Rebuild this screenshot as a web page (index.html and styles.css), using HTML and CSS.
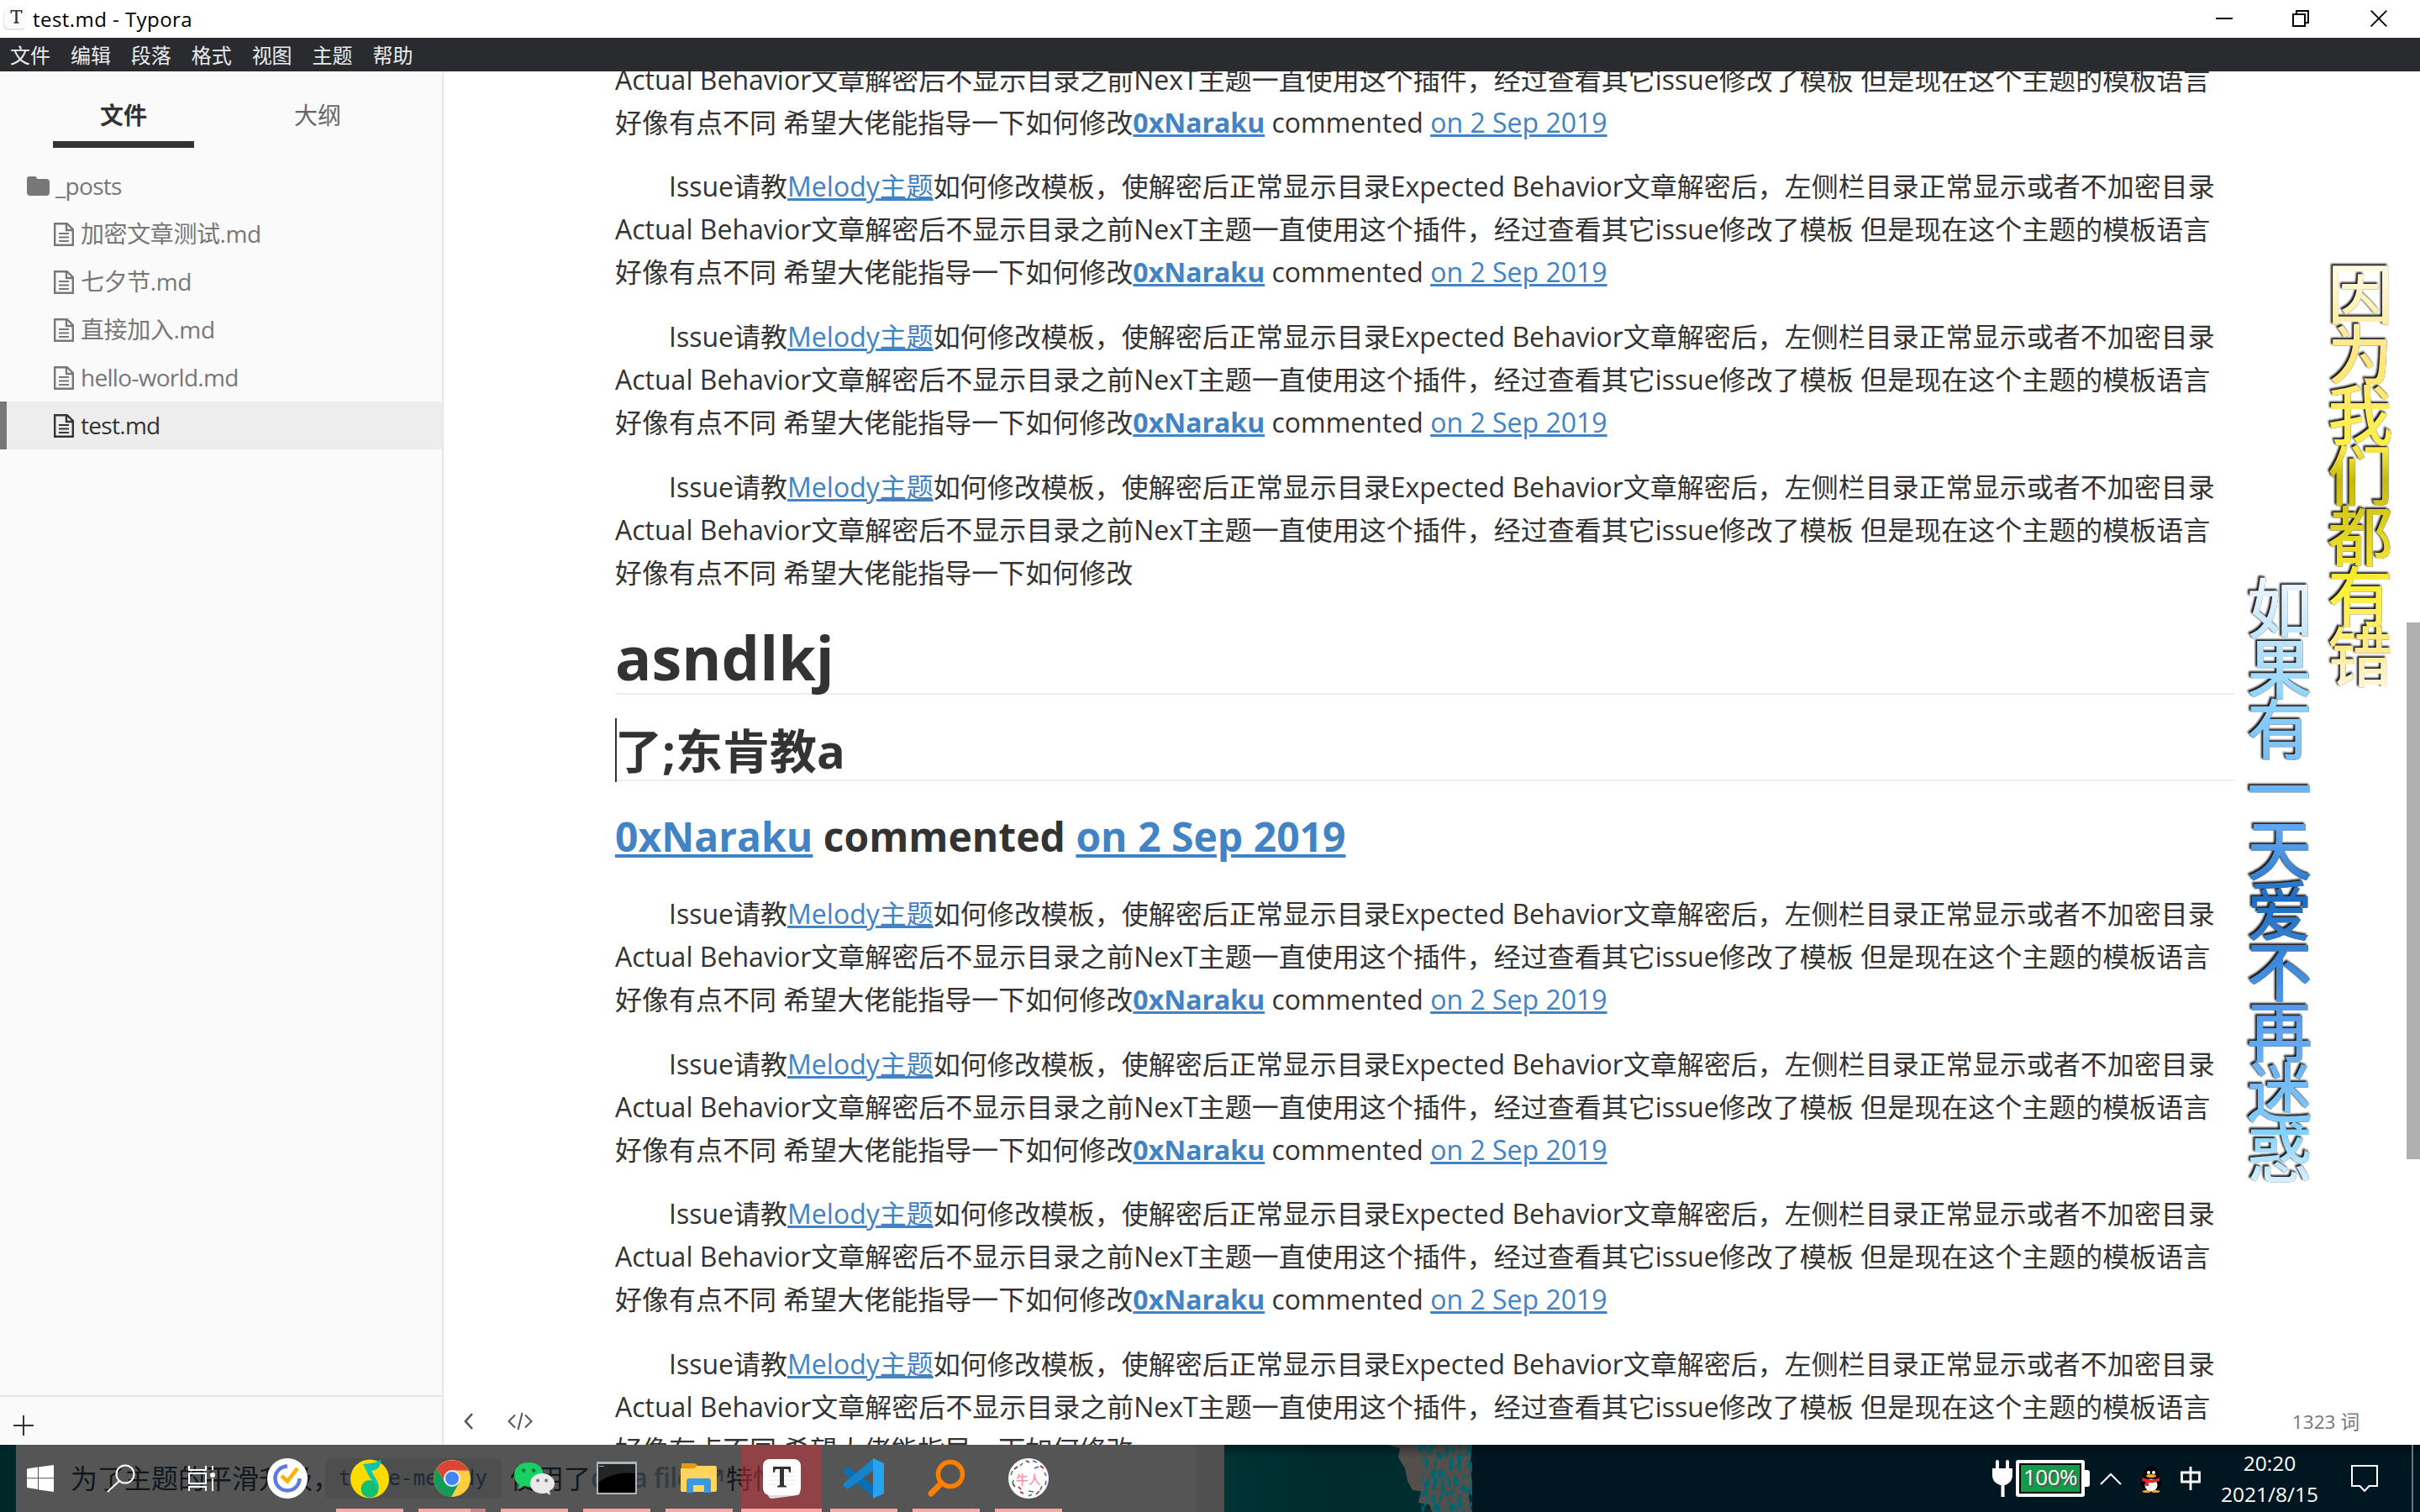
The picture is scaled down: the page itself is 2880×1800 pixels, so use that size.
FILE: index.html
```html
<!DOCTYPE html>
<html lang="zh-CN">
<head>
<meta charset="utf-8">
<title>test.md - Typora</title>
<link rel="stylesheet" href="styles.css">
</head>
<body>
<div class="screen">
  <header class="titlebar">
    <svg class="app-icon" width="30" height="30" viewBox="0 0 30 30"><rect x="1" y="3" width="27" height="26" rx="6" fill="#e4e4e4"/><rect x="2" y="0" width="27" height="27" rx="6" fill="#fafafa"/><path d="M9.500 5h14v4h-1l-.8-2.500h-4v12.500l2 .8v.9h-6.400v-.9l2-.8V6.500h-4L10.500 9h-1z" fill="#333"/></svg>
    <span class="title">test.md - Typora</span>
    <div class="caption">
      <svg width="20" height="20" viewBox="0 0 20 20"><path d="M0 10h20" stroke="#000" stroke-width="2"/></svg>
      <svg width="20" height="20" viewBox="0 0 20 20" fill="none" stroke="#000" stroke-width="2"><path d="M1 5h14v14H1zM5 5V1h14v14h-4"/></svg>
      <svg width="20" height="20" viewBox="0 0 20 20"><path d="M.7.700l18.600 18.600M19.300.700L.7 19.300" stroke="#000" stroke-width="1.800"/></svg>
    </div>
  </header>
  <nav class="menubar"><span>文件</span><span>编辑</span><span>段落</span><span>格式</span><span>视图</span><span>主题</span><span>帮助</span></nav>
  <svg width="0" height="0" class="defs">
    <symbol id="file" viewBox="0 0 24 28"><path d="M1.200 1.200h14.600L22.800 8v18.800H1.200zM15 1.200V9h7.800" fill="none" stroke="currentColor" stroke-width="2.400"/><path d="M6 13h12M6 17.500h12M6 22h12" stroke="currentColor" stroke-width="2"/></symbol>
  </svg>
  <div class="workspace">
    <aside class="sidebar">
      <div class="tabs"><div class="tab active">文件</div><div class="tab">大纲</div></div>
      <ul class="tree">
        <li class="folder latin"><svg width="28" height="24" viewBox="0 0 28 24"><path d="M0 3a3 3 0 0 1 3-3h6a3 3 0 0 1 3 3h11a4 4 0 0 1 4 4v12a4 4 0 0 1-4 4H4a4 4 0 0 1-4-4z" fill="#777"/></svg>_posts</li>
        <li><svg width="24" height="28"><use href="#file"/></svg>加密文章测试.md</li>
        <li><svg width="24" height="28"><use href="#file"/></svg>七夕节.md</li>
        <li><svg width="24" height="28"><use href="#file"/></svg>直接加入.md</li>
        <li class="latin"><svg width="24" height="28"><use href="#file"/></svg>hello-world.md</li>
        <li class="current latin"><svg width="24" height="28"><use href="#file"/></svg>test.md</li>
      </ul>
      <div class="sidebar-footer"><svg width="24" height="24" viewBox="0 0 24 24"><path d="M12 0v24M0 12h24" stroke="#333" stroke-width="2"/></svg></div>
    </aside>
    <main class="editor">
      <article class="doc">
        <p>Issue请教<a>Melody主题</a>如何修改模板，使解密后正常显示目录Expected Behavior文章解密后，左侧栏目录正常显示或者不加密目录<br>Actual Behavior文章解密后不显示目录之前NexT主题一直使用这个插件，经过查看其它issue修改了模板 但是现在这个主题的模板语言<br>好像有点不同 希望大佬能指导一下如何修改<a><b>0xNaraku</b></a> commented <a>on 2 Sep 2019</a></p>
        <p>Issue请教<a>Melody主题</a>如何修改模板，使解密后正常显示目录Expected Behavior文章解密后，左侧栏目录正常显示或者不加密目录<br>Actual Behavior文章解密后不显示目录之前NexT主题一直使用这个插件，经过查看其它issue修改了模板 但是现在这个主题的模板语言<br>好像有点不同 希望大佬能指导一下如何修改<a><b>0xNaraku</b></a> commented <a>on 2 Sep 2019</a></p>
        <p>Issue请教<a>Melody主题</a>如何修改模板，使解密后正常显示目录Expected Behavior文章解密后，左侧栏目录正常显示或者不加密目录<br>Actual Behavior文章解密后不显示目录之前NexT主题一直使用这个插件，经过查看其它issue修改了模板 但是现在这个主题的模板语言<br>好像有点不同 希望大佬能指导一下如何修改<a><b>0xNaraku</b></a> commented <a>on 2 Sep 2019</a></p>
        <p>Issue请教<a>Melody主题</a>如何修改模板，使解密后正常显示目录Expected Behavior文章解密后，左侧栏目录正常显示或者不加密目录<br>Actual Behavior文章解密后不显示目录之前NexT主题一直使用这个插件，经过查看其它issue修改了模板 但是现在这个主题的模板语言<br>好像有点不同 希望大佬能指导一下如何修改</p>
        <h1>asndlkj</h1>
        <h2><i class="caret"></i>了;东肯教a</h2>
        <h3><a>0xNaraku</a> commented <a>on 2 Sep 2019</a></h3>
        <p>Issue请教<a>Melody主题</a>如何修改模板，使解密后正常显示目录Expected Behavior文章解密后，左侧栏目录正常显示或者不加密目录<br>Actual Behavior文章解密后不显示目录之前NexT主题一直使用这个插件，经过查看其它issue修改了模板 但是现在这个主题的模板语言<br>好像有点不同 希望大佬能指导一下如何修改<a><b>0xNaraku</b></a> commented <a>on 2 Sep 2019</a></p>
        <p>Issue请教<a>Melody主题</a>如何修改模板，使解密后正常显示目录Expected Behavior文章解密后，左侧栏目录正常显示或者不加密目录<br>Actual Behavior文章解密后不显示目录之前NexT主题一直使用这个插件，经过查看其它issue修改了模板 但是现在这个主题的模板语言<br>好像有点不同 希望大佬能指导一下如何修改<a><b>0xNaraku</b></a> commented <a>on 2 Sep 2019</a></p>
        <p>Issue请教<a>Melody主题</a>如何修改模板，使解密后正常显示目录Expected Behavior文章解密后，左侧栏目录正常显示或者不加密目录<br>Actual Behavior文章解密后不显示目录之前NexT主题一直使用这个插件，经过查看其它issue修改了模板 但是现在这个主题的模板语言<br>好像有点不同 希望大佬能指导一下如何修改<a><b>0xNaraku</b></a> commented <a>on 2 Sep 2019</a></p>
        <p>Issue请教<a>Melody主题</a>如何修改模板，使解密后正常显示目录Expected Behavior文章解密后，左侧栏目录正常显示或者不加密目录<br>Actual Behavior文章解密后不显示目录之前NexT主题一直使用这个插件，经过查看其它issue修改了模板 但是现在这个主题的模板语言<br>好像有点不同 希望大佬能指导一下如何修改</p>
      </article>
      <div class="editor-footer">
        <svg width="11" height="20" viewBox="0 0 11 20"><path d="M10 1L2 10l8 9" fill="none" stroke="#555" stroke-width="2.600"/></svg>
        <svg width="30" height="22" viewBox="0 0 30 22"><path d="M9 3.500L1.500 11 9 18.500M21 3.500L28.500 11 21 18.500M17.500 1l-5 20" fill="none" stroke="#555" stroke-width="2"/></svg>
        <span class="words">1323 词</span>
      </div>
      <div class="scroll-thumb"></div>
    </main>
  </div>
  <div class="lyric yellow">因为我们都有错</div>
  <div class="lyric blue">如果有一天爱不再迷惑</div>

  <footer class="taskbar">
    <svg class="wallpaper" width="2880" height="80" viewBox="0 0 2880 80">
      <defs>
        <linearGradient id="sea" x1="0" x2="1"><stop offset="0" stop-color="#003434"/><stop offset=".45" stop-color="#002a2c"/><stop offset="1" stop-color="#002f31"/></linearGradient>
        <filter id="grain" x="0" y="0" width="1" height="1"><feTurbulence type="fractalNoise" baseFrequency=".2 .1" numOctaves="3" seed="8"/><feColorMatrix values="0 0 0 0 0  0 0 0 0 .13  0 0 0 0 .16  9 0 0 0 -4.400"/><feComposite in2="SourceGraphic" operator="in"/></filter>
        <linearGradient id="shade" x2="0" y2="1"><stop offset="0" stop-opacity=".35"/><stop offset="1" stop-opacity="0"/></linearGradient>
      </defs>
      <rect width="2880" height="80" fill="#001722"/>
      <rect width="19" height="80" fill="#002829"/>
      <rect x="19" width="1438" height="80" fill="#555"/>
      <rect x="1423" width="34" height="80" fill="#505050"/>
      <path d="M1457 0H1752V80H1457z" fill="url(#sea)"/>
      <path d="M1651 0h97l3 10-2 14 3 22-4 15 3 19h-47l-3-9-13-2 3-14-10-1-6-11-3-15-8-13 2-11z" fill="#554f4b"/>
      <path d="M1680 0h72v80h-60l-2-26 4-28z" fill="#554f4b" filter="url(#grain)"/>
      <rect x="1457" width="1423" height="16" fill="url(#shade)"/>
    </svg>
    <div class="behind"><span>为了主题的平滑升级<span class="half">，</span></span><code>theme-melody</code><span>使用了</span><b>data files</b><svg class="ext" width="16" height="24" viewBox="0 0 16 24"><path d="M2 5h12v13M14 5L2 19" fill="none" stroke="#2f363e" stroke-width="2.500"/></svg><span class="tail">特性</span></div>
    <div class="apps">
      <div class="sys"><svg width="32" height="32" viewBox="0 0 32 32" fill="#fff"><path d="M0 4.500l13-1.900v12.700H0zM14 2.400L32 0v15.300H14zM0 16.300h13V29L0 27zM14 16.300h18V32l-18-2.500z"/></svg></div>
      <div class="sys"><svg width="34" height="34" viewBox="0 0 34 34" fill="none" stroke="#fff" stroke-width="2"><circle cx="22" cy="12" r="10.500"/><path d="M15 20L1 33"/></svg></div>
      <div class="sys"><svg width="34" height="32" viewBox="0 0 34 32" fill="none" stroke="#fff" stroke-width="2"><path d="M2 1v5h20V1M2 31v-5h20v5M2 10h20v12H2zM30 1v5M30 16v15"/><circle cx="30" cy="12" r="3" fill="#fff" stroke="none"/></svg></div>
      <div class="app first"><svg width="48" height="48" viewBox="0 0 48 48"><circle cx="24" cy="24" r="24" fill="#fff"/><path d="M24 9.500A14.500 14.500 0 1 0 38.500 24" fill="none" stroke="#5b7be0" stroke-width="4.500"/><path d="M17 21l7 6.500L36 12" fill="none" stroke="#ffb000" stroke-width="4.500"/></svg></div>
      <div class="app run"><svg width="48" height="48" viewBox="0 0 48 48"><circle cx="24" cy="24.500" r="23" fill="#ffdc00"/><circle cx="24" cy="36.500" r="10.500" fill="#12bf70"/><path d="M37 1c-4 5-12 5-21 6l8 16c4 4 7 9 9 15l2-2c0-9-6-14-9-21 8-1 12-6 11-14z" fill="#13c4ad"/></svg></div>
      <div class="app run stacked"><svg width="46" height="46" viewBox="0 0 46 46"><circle cx="23" cy="23" r="22" fill="#ffcd40"/><path d="M4.500 11.500A22 22 0 0 1 42.500 13.500H23l-9 12z" fill="#db4437"/><path d="M4.500 11.500A22 22 0 0 0 22 45l9.500-17L14 26z" fill="#149a58"/><circle cx="23" cy="23" r="10" fill="#f1f1f1"/><circle cx="23" cy="23" r="8" fill="#4285f4"/></svg></div>
      <div class="app run"><svg width="48" height="42" viewBox="0 0 48 42"><path d="M17 2C7 2 0 8 0 17c0 5 2 9 6 11l-1 6 6-4c15 3 24-4 24-13S27 2 17 2z" fill="#18d063"/><circle cx="11" cy="11.500" r="2.300" fill="#0b7438"/><circle cx="23" cy="11.500" r="2.300" fill="#0b7438"/><path d="M33 15c-8 0-14 5-14 12s6 12 14 12c2 0 4 0 5-1l5 3-1-5c4-2 6-5 6-9 0-7-7-12-15-12z" fill="#e9e9e9"/><circle cx="28" cy="23.500" r="2" fill="#777"/><circle cx="38" cy="23.500" r="2" fill="#777"/></svg></div>
      <div class="app run"><svg width="48" height="40" viewBox="0 0 48 40"><path d="M0 0h48v39H0z" fill="#aeb4bb"/><path d="M2 3h44v34H2z" fill="#000"/><path d="M2 3h44v11C27 12 12 17 2 25z" fill="#252525"/><path d="M3 5.500h6" stroke="#aaa"/></svg></div>
      <div class="app run"><svg width="44" height="36" viewBox="0 0 44 36"><path d="M1 0h16l4 3v6H1z" fill="#e29c00"/><path d="M0 6h16l4-3h22l1 2v28l-2 1H1l-1-2z" fill="#ffd55f"/><path d="M7 35V21q0-3 3-3h23q3 0 3 3v14h-8v-9H15v9z" fill="#3b97e0"/></svg></div>
      <div class="app run focused"><svg width="48" height="48" viewBox="0 0 48 48"><path d="M2 36l44 3a4 4 0 0 1-3 5l-29 4a5 5 0 0 1-6-4z" fill="#ddd"/><rect x="2" y="1" width="45" height="43" rx="8" fill="#fff"/><path d="M9 16h31M9 21h31M9 26h31M9 31h31" stroke="#e8e8e8"/><path d="M14 10h21v7h-1.500l-1.500-4h-5v19l3 1v1.500H19V33l3-1V13h-5l-1.500 4H14z" fill="#333"/></svg></div>
      <div class="app run"><svg width="50" height="48" viewBox="0 0 50 48"><path d="M1 14l5-4 31 23v14L1 17z" fill="#0a6fb5"/><path d="M1 33l5 4L37 14V0L1 30z" fill="#1484cb"/><path d="M36 0l13 6v36l-13 6z" fill="#26a3f1"/></svg></div>
      <div class="app run"><svg width="46" height="46" viewBox="0 0 46 46" fill="none"><circle cx="28" cy="18" r="14.500" stroke="#ff8000" stroke-width="5.500"/><path d="M17 29L5 41" stroke="#ff8000" stroke-width="7" stroke-linecap="round"/></svg></div>
      <div class="app run"><svg width="48" height="48" viewBox="0 0 48 48"><circle cx="24" cy="24" r="24" fill="#fff"/><g fill="none" stroke-width="1.600"><path d="M7 13l4-3M21 3l4 2M38 9l4 3M5 30l3 4M14 40l4 2M33 43l4-4M12 34l3 3" stroke="#8e2a35"/><path d="M3 20l2-5M17 6l-3 3M40 33l-2 5M6 26l-1 4M24 45l4-2" stroke="#3d8a48"/><path d="M43 17l2 4M45 27l-1 5M29 3l5 2M24 39l6 1M31 12l5-2" stroke="#4b67b5"/></g><text x="24" y="31" text-anchor="middle" class="badge-text">牛人</text></svg></div>
    </div>
    <div class="tray">
      <svg width="24" height="44" viewBox="0 0 24 44" fill="#fff"><path d="M4 2a2 2 0 0 1 4 0v8h8V2a2 2 0 0 1 4 0v8h4v8c0 6-4 11-9.500 12v12a2 2 0 0 1-4 2V30C4 29 0 24 0 18v-8h4z"/></svg>
      <div class="battery">100%</div>
      <svg class="chev" width="26" height="15" viewBox="0 0 26 15"><path d="M1 14L13 2l12 12" fill="none" stroke="#fff" stroke-width="2"/></svg>
      <svg class="qq" width="26" height="31" viewBox="0 0 26 31"><ellipse cx="13" cy="12" rx="10" ry="12" fill="#000"/><ellipse cx="13" cy="20" rx="12.500" ry="8" fill="#000"/><ellipse cx="13" cy="22" rx="7.500" ry="7.500" fill="#fff"/><circle cx="10" cy="7" r="2" fill="#fff"/><circle cx="16" cy="7" r="2" fill="#fff"/><ellipse cx="13" cy="11" rx="6" ry="2" fill="#f7a81b"/><path d="M3 13q10 5 20 0v4q-7 3-13 2v4H6v-5l-4-1z" fill="#e8232a"/><ellipse cx="7.500" cy="29.500" rx="5" ry="1.600" fill="#f7a81b"/><ellipse cx="18.500" cy="29.500" rx="5" ry="1.600" fill="#f7a81b"/></svg>
      <svg class="ime" width="24" height="28" viewBox="0 0 24 28"><path d="M1.500 7h21v11h-21zM12 0v28" fill="none" stroke="#fff" stroke-width="2.800"/></svg>
      <div class="clock"><span>20:20</span><span>2021/8/15</span></div>
      <svg class="notice" width="32" height="32" viewBox="0 0 32 32"><path d="M1 1h30v24H21.500L16 31l-5.500-6H1z" fill="none" stroke="#fff" stroke-width="2"/></svg>
      <i class="peek"></i>
    </div>
  </footer>
</div>
</body>
</html>
```
FILE: styles.css
```css
* { box-sizing: border-box; }
body {
  margin: 0;
  font-family: "Open Sans", "Noto Sans CJK SC", sans-serif;
  color: #333;
  background: #fff;
}
svg { display: block; flex: none; }
.defs { position: absolute; }
.screen {
  position: relative;
  width: 2880px;
  height: 1800px;
  display: flex;
  flex-direction: column;
  overflow: hidden;
}

.titlebar { height: 45px; flex: none; display: flex; align-items: center; padding: 0 39px 2px 3px; }
.title { margin: 2px 0 0 6px; font-size: 24px; letter-spacing: .45px; color: #000; }
.caption { margin-left: auto; display: flex; gap: 72px; }
.caption svg:first-child { margin-right: -1px; }
.caption svg:nth-child(2) { margin-right: 1px; }

.menubar {
  height: 40px; flex: none;
  display: flex; align-items: center; gap: 24px;
  padding-left: 12px;
  background: #2a2b2f; color: #e9ecef;
  font-size: 24px; line-height: 40px;
}
.menubar span { padding-top: 2px; margin-right: -.1px; }

.workspace { height: 1635px; flex: none; display: flex; }
.sidebar {
  width: 528px; flex: none;
  display: flex; flex-direction: column;
  background: #fafafa;
  border-right: 2px solid #e7e7e7;
}
.tabs { display: flex; gap: 63px; padding-left: 63px; height: 91px; }
.tab {
  width: 168px; height: 91px;
  text-align: center;
  font-size: 28px; line-height: 104px;
  color: #666;
}
.tab.active { color: #333; font-weight: 700; border-bottom: 8px solid #333; }
.tree { list-style: none; margin: 17px 0 0; padding: 0; color: #777; font-size: 28px; letter-spacing: -.4px; }
.tree li { height: 57px; display: flex; align-items: center; gap: 8px; padding-left: 64px; line-height: 57px; white-space: nowrap; }
.tree .latin { letter-spacing: -.7px; }
.tree .folder { padding-left: 32px; gap: 6px; }
.tree .current { background: #ededed; color: #333; border-left: 8px solid #777; padding-left: 56px; }
.sidebar-footer { margin-top: auto; height: 59px; border-top: 2px solid #e7e7e7; padding: 22px 0 0 16px; }

.editor { position: relative; flex: 1; overflow: hidden; }
.doc { width: 1928px; margin: -67.200px 0 0 204px; font-size: 32px; line-height: 51px; white-space: nowrap; }
.doc p { margin: 0 0 25.600px; text-indent: 64px; }
.doc a { color: #4183c4; text-decoration: underline; }
.doc h1, .doc h2, .doc h3 { margin: 32px 0; font-weight: 700; }
.doc h1 { font-size: 72px; line-height: 86.400px; border-bottom: 2px solid #eee; }
.doc h2 { position: relative; font-size: 56px; line-height: 68.600px; border-bottom: 2px solid #eee; }
.doc h3 { font-size: 48px; line-height: 68.600px; }
.caret { position: absolute; left: 0; top: -4px; width: 2px; height: 76px; background: #333; }
.editor-footer {
  position: absolute; left: 24px; right: 72px; bottom: 16px; height: 24px;
  display: flex; align-items: center; gap: 41px;
}
.words { margin: -2px 0 0 auto; color: #777; font-size: 22.600px; }
.scroll-thumb { position: absolute; right: 0; top: 656px; width: 16px; height: 639px; background: #b0b0b0; }

.lyric {
  position: absolute;
  writing-mode: vertical-rl;
  font-family: "Noto Sans CJK SC", sans-serif;
  font-size: 78px; line-height: 84px; letter-spacing: -6px;
  font-weight: 500;
  color: transparent;
  -webkit-background-clip: text;
  background-clip: text;
  filter: drop-shadow(0 0 .7px #333) drop-shadow(-2px -2px .8px #111);
}
.yellow {
  left: 2767px; top: 311px; height: 520px;
  background-image: linear-gradient(#fffbe8, #ffe680 22%, #fff04a 42%, #c8b90f 50%, #fff23c 76%, #ffe98a 88%, #fff6d8 97%);
}
.blue {
  left: 2671px; top: 685px; height: 740px;
  background-image: linear-gradient(#f0f7fd, #8fd3fb 20%, #5ba3f0 42%, #1f6dc0 52%, #5ba0f0 72%, #86d2fe 90%, #e8f7ff 99%);
}

.taskbar { position: relative; height: 80px; flex: none; display: flex; justify-content: space-between; background: #001722; }
.wallpaper { position: absolute; inset: 0; }
.behind {
  position: absolute; left: 84px; top: -2px; height: 80px;
  display: flex; align-items: center;
  font-size: 32px; color: #10181f; white-space: nowrap;
}
.half { font-feature-settings: "halt"; }
.behind code {
  margin: 4px 10px 0 -1px; padding: 0 16px; width: 210px; height: 48px;
  border-radius: 6px; background: #4e4e4e; color: #1d2a33;
  font: 24.500px/48px "DejaVu Sans Mono", monospace;
}
.behind b { color: #343b45; font-weight: 600; width: 142px; letter-spacing: -.6px; }
.ext { margin: 0 3px 0 0; }
.apps { position: relative; display: flex; }
.sys, .app { height: 80px; display: flex; align-items: center; justify-content: center; }
.sys { width: 96px; }
.app { width: 98px; }
.first { margin-left: 5px; }
.run { position: relative; }
.run::after { content: ""; position: absolute; left: 9px; bottom: 0; width: 80px; height: 4px; background: #ffa5a5; }
.stacked::after { background: linear-gradient(90deg, #ffa5a5 62px, #c98383 62px); }
.focused { background: linear-gradient(rgba(205, 47, 55, .5), rgba(205, 47, 55, .5)) 1px 0 / 96px 80px no-repeat; }
.focused::after { left: 1px; width: 96px; }
.badge-text { font: 500 15px "Noto Sans CJK SC", sans-serif; fill: #ff92ac; }

.tray { position: relative; display: flex; align-items: center; color: #fff; padding-right: 8px; }
.battery {
  position: relative; margin-left: 4px;
  width: 82px; height: 44px;
  border: 4px solid #fff; border-radius: 3px;
  background: #139b48; box-shadow: inset 0 0 0 2px #000;
  font-size: 26px; line-height: 33px; text-align: center; letter-spacing: -.5px;
  text-shadow: 2px 2px 1px #555;
}
.battery::after { content: ""; position: absolute; left: 78px; top: 8px; width: 6px; height: 20px; background: #fff; border-radius: 0 3px 3px 0; }
.chev { margin-left: 18px; }
.qq { margin: 2px 0 0 22px; }
.ime { margin-left: 22px; }
.clock { margin-left: 22px; width: 120px; display: flex; flex-direction: column; align-items: center; font-size: 24.500px; line-height: 37px; white-space: nowrap; }
.notice { margin-left: 37px; }
.peek { margin-left: 40px; width: 2px; height: 80px; background: #67747b; }
```
